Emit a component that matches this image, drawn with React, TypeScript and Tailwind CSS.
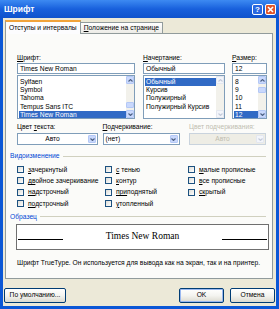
import React from "react";

const fonts = ["Sylfaen", "Symbol", "Tahoma", "Tempus Sans ITC", "Times New Roman"];
const styles = ["Обычный", "Курсив", "Полужирный", "Полужирный Курсив"];
const sizes = ["8", "9", "10", "11", "12"];

function Arrow({ up, disabled }: { up?: boolean; disabled?: boolean }) {
  return (
    <div
      className={`h-[8px] w-[8px] flex items-center justify-center rounded-[1px] border ${
        disabled ? "border-[#e3e7f0] bg-[#f3f5fa]" : "border-[#b4c8f6] bg-[#c9d8fc]"
      }`}
    >
      <svg width="5" height="3" viewBox="0 0 5 3">
        <path
          d={up ? "M0.5 2.5 L2.5 0.5 L4.5 2.5" : "M0.5 0.5 L2.5 2.5 L4.5 0.5"}
          fill="none"
          stroke={disabled ? "#c4cbdb" : "#4d6185"}
          strokeWidth="1.1"
        />
      </svg>
    </div>
  );
}

function ScrollBar({ thumbTop, disabled }: { thumbTop?: number; disabled?: boolean }) {
  return (
    <div className="w-[8px] flex flex-col bg-[#f2f1eb]">
      <Arrow up disabled={disabled} />
      <div className="flex-1 relative">
        {!disabled && (
          <div
            className="absolute left-0 w-[8px] h-[6px] rounded-[1px] border border-[#b4c8f6] bg-[#c9d8fc]"
            style={{ top: thumbTop }}
          />
        )}
      </div>
      <Arrow disabled={disabled} />
    </div>
  );
}

function ListBox({
  items,
  selected,
  width,
  thumbTop,
  disabled,
}: {
  items: string[];
  selected: number;
  width: string;
  thumbTop?: number;
  disabled?: boolean;
}) {
  return (
    <div className={`${width} h-[44px] flex border border-[#7f9db9] bg-white`}>
      <div className="flex-1 flex flex-col pt-[2px] pl-[1px] overflow-hidden">
        {items.map((it, i) => (
          <div
            key={it}
            className={`h-[8.2px] leading-[8.2px] pl-[1px] whitespace-nowrap ${
              i === selected ? "bg-[#316ac5] text-white" : "text-black"
            }`}
          >
            {it}
          </div>
        ))}
      </div>
      <ScrollBar thumbTop={thumbTop} disabled={disabled} />
    </div>
  );
}

function Combo({
  value,
  width,
  center,
  disabled,
}: {
  value: string;
  width: string;
  center?: boolean;
  disabled?: boolean;
}) {
  return (
    <div
      className={`${width} h-[12px] flex border ${
        disabled ? "border-[#c9d3dd] bg-[#eeede5]" : "border-[#7f9db9] bg-white"
      }`}
    >
      <div
        className={`flex-1 leading-[10px] px-[2px] ${center ? "text-center" : ""} ${
          disabled ? "text-[#c0bdb0]" : "text-black"
        }`}
      >
        {value}
      </div>
      <div className="p-[1px]">
        <Arrow disabled={disabled} />
      </div>
    </div>
  );
}

function Check({ label, u }: { label: string; u: number }) {
  return (
    <div className="h-[11.3px] flex items-center gap-[4px] whitespace-nowrap">
      <div className="w-[7px] h-[7px] border border-[#1c5180] bg-gradient-to-br from-[#dcdcd7] to-white" />
      <span>
        <span className="underline">{label.slice(0, u)}</span>
        {label.slice(u)}
      </span>
    </div>
  );
}

function Group({ title }: { title: string }) {
  return (
    <div className="flex items-center gap-[3px] pl-[4px] pr-[3px] h-[7px]">
      <span className="text-[#0046d5] whitespace-nowrap">{title}</span>
      <div className="flex-1 h-px bg-[#d0d0bf]" />
    </div>
  );
}

function Btn({ children, primary, width }: { children: React.ReactNode; primary?: boolean; width: string }) {
  return (
    <div
      className={`${width} h-[15px] rounded-[2px] border border-[#003c74] bg-gradient-to-b from-white via-[#f4f4f0] to-[#dcdad0] flex items-center justify-center ${
        primary ? "shadow-[inset_0_0_0_1px_#9ab8f0]" : ""
      }`}
    >
      {children}
    </div>
  );
}

export default function App() {
  return (
    <div className="w-[279px] h-[309px] flex flex-col bg-[#0b57d6] font-['Liberation_Sans',Arial,sans-serif] text-[6.7px] text-black overflow-hidden">
      <div className="h-[18px] flex items-center justify-between pl-[4px] pr-[3px] bg-gradient-to-b from-[#3d8af2] via-[#1860dc] to-[#0f52cc]">
        <span className="text-white font-bold text-[8.5px]">Шрифт</span>
        <div className="flex gap-[2px]">
          <div className="w-[11px] h-[11px] rounded-[2px] border border-white bg-[#2a68e0] text-white font-bold text-[8px] leading-[9px] text-center">
            ?
          </div>
          <div className="w-[11px] h-[11px] rounded-[2px] border border-white bg-[#e2552a] flex items-center justify-center">
            <svg width="7" height="7" viewBox="0 0 7 7">
              <path d="M1 1 L6 6 M6 1 L1 6" stroke="white" strokeWidth="1.6" />
            </svg>
          </div>
        </div>
      </div>

      <div className="flex-1 mx-[3px] mb-[3px] bg-[#ece9d8] flex flex-col">
        <div className="flex items-end pl-[2px] pt-[2px] h-[15px]">
          <div className="h-[14px] px-[3px] border-x border-t-2 border-x-[#919b9c] border-t-[#f1a33a] bg-[#fcfcfe] leading-[11px] -mb-px relative z-10 whitespace-nowrap">
            Отступы и интервалы
          </div>
          <div className="h-[11px] px-[3px] border-r border-t border-[#919b9c] bg-gradient-to-b from-white to-[#ecebe6] leading-[10px] whitespace-nowrap">
            <span className="underline">П</span>оложение на странице
          </div>
        </div>

        <div className="ml-[2px] mr-[3px] h-[246px] border border-[#919b9c] bg-[#fbfbf9] flex flex-col pl-[11px] pr-[6px] pt-[20px]">
          <div className="flex gap-[8px]">
            <div className="w-[118px] flex flex-col">
              <div className="h-[9px] leading-[8px]">
                <span className="underline">Ш</span>рифт:
              </div>
              <div className="h-[11px] border border-[#7f9db9] bg-white px-[2px] leading-[9px] mb-px">
                Times New Roman
              </div>
              <ListBox items={fonts} selected={4} width="w-[118px]" thumbTop={18} />
            </div>
            <div className="w-[82px] flex flex-col">
              <div className="h-[9px] leading-[8px]">
                <span className="underline">Н</span>ачертание:
              </div>
              <div className="h-[11px] border border-[#7f9db9] bg-white px-[2px] leading-[9px] mb-px">
                Обычный
              </div>
              <ListBox items={styles} selected={0} width="w-[82px]" disabled />
            </div>
            <div className="w-[35px] ml-[-1px] flex flex-col">
              <div className="h-[9px] leading-[8px]">
                <span className="underline">Р</span>азмер:
              </div>
              <div className="h-[11px] border border-[#7f9db9] bg-white px-[2px] leading-[9px] mb-px">
                12
              </div>
              <ListBox items={sizes} selected={4} width="w-[35px]" thumbTop={3} />
            </div>
          </div>

          <div className="flex mt-[4px]">
            <div className="w-[86px] flex flex-col gap-[3px]">
              <div className="h-[7px] leading-[7px]">
                Цвет <span className="underline">т</span>екста:
              </div>
              <Combo value="Авто" width="w-[81px]" center />
            </div>
            <div className="w-[87px] flex flex-col gap-[3px]">
              <div className="h-[7px] leading-[7px]">
                <span className="underline">П</span>одчеркивание:
              </div>
              <Combo value="(нет)" width="w-[77px]" />
            </div>
            <div className="flex-1 flex flex-col gap-[3px]">
              <div className="h-[7px] leading-[7px] text-[#c0bdb0] whitespace-nowrap">Цвет подчеркивания:</div>
              <Combo value="Авто" width="w-[77px]" center disabled />
            </div>
          </div>

          <div className="-ml-[11px] mr-[-3px] mt-[8px]">
            <Group title="Видоизменение" />
          </div>

          <div className="flex mt-[4px]">
            <div className="w-[88px] flex flex-col">
              <Check label="зачеркнутый" u={1} />
              <Check label="двойное зачеркивание" u={2} />
              <Check label="надстрочный" u={2} />
              <Check label="подстрочный" u={2} />
            </div>
            <div className="w-[83px] flex flex-col">
              <Check label="с тенью" u={1} />
              <Check label="контур" u={1} />
              <Check label="приподнятый" u={3} />
              <Check label="утопленный" u={1} />
            </div>
            <div className="flex-1 flex flex-col">
              <Check label="малые прописные" u={1} />
              <Check label="все прописные" u={1} />
              <Check label="скрытый" u={2} />
            </div>
          </div>

          <div className="-ml-[11px] mr-[-3px] mt-[4px]">
            <Group title="Образец" />
          </div>

          <div className="-ml-[1px] mr-[-3px] mt-[4px] h-[26px] border border-[#6f6f6f] bg-white flex items-end pb-[8px] px-[1px] gap-[6px]">
            <div className="w-[45px] h-px bg-black mb-[1px]" />
            <div className="flex-1 text-center font-['Liberation_Serif','Times_New_Roman',serif] text-[9.5px] leading-[10px]">
              Times New Roman
            </div>
            <div className="w-[45px] h-px bg-black mb-[1px]" />
          </div>

          <div className="mt-[8px] whitespace-nowrap">
            Шрифт TrueType. Он используется для вывода как на экран, так и на принтер.
          </div>
        </div>

        <div className="flex items-center px-[1px] pt-[9px]">
          <Btn width="w-[62px]">
            <span>
              По умолчанию...
            </span>
          </Btn>
          <div className="flex-1" />
          <Btn width="w-[45px]" primary>
            OK
          </Btn>
          <div className="w-[6px]" />
          <Btn width="w-[45px]">Отмена</Btn>
        </div>
      </div>
    </div>
  );
}
